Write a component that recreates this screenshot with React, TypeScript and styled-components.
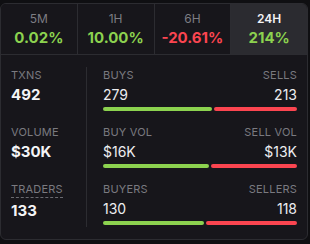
import styled, { createGlobalStyle } from 'styled-components';

const GlobalStyle = createGlobalStyle`
  body {
    margin: 0;
    background: #0f0f12;
    font-family: Inter, "Noto Sans", sans-serif;
  }
`;

const GREEN = '#8cd24f';
const RED = '#fb4550';

interface ITab {
  label: string;
  value: string;
  up: boolean;
}

interface IRow {
  leftLabel: string;
  leftValue: string;
  dashed?: boolean;
  buyLabel: string;
  sellLabel: string;
  buy: string;
  sell: string;
  buyNum: number;
  sellNum: number;
}

const tabs: ITab[] = [
  { label: '5M', value: '0.02%', up: true },
  { label: '1H', value: '10.00%', up: true },
  { label: '6H', value: '-20.61%', up: false },
  { label: '24H', value: '214%', up: true },
];

const rows: IRow[] = [
  { leftLabel: 'TXNS', leftValue: '492', buyLabel: 'BUYS', sellLabel: 'SELLS', buy: '279', sell: '213', buyNum: 279, sellNum: 213 },
  { leftLabel: 'VOLUME', leftValue: '$30K', buyLabel: 'BUY VOL', sellLabel: 'SELL VOL', buy: '$16K', sell: '$13K', buyNum: 16, sellNum: 13 },
  { leftLabel: 'TRADERS', leftValue: '133', dashed: true, buyLabel: 'BUYERS', sellLabel: 'SELLERS', buy: '130', sell: '118', buyNum: 130, sellNum: 118 },
];

export default function App() {
  return (
    <>
      <GlobalStyle />
      <Panel>
        <TabRow>
          {tabs.map((t, i) => (
            <Tab key={t.label} $active={i === 3}>
              <TabLabel $active={i === 3}>{t.label}</TabLabel>
              <TabValue $up={t.up}>{t.value}</TabValue>
            </Tab>
          ))}
        </TabRow>
        <Body>
          <LeftCol>
            {rows.map((r) => (
              <Stat key={r.leftLabel}>
                <Label $dashed={r.dashed}>{r.leftLabel}</Label>
                <BigValue>{r.leftValue}</BigValue>
              </Stat>
            ))}
          </LeftCol>
          <RightCol>
            {rows.map((r) => (
              <Split key={r.buyLabel}>
                <SplitHead>
                  <Side>
                    <Label>{r.buyLabel}</Label>
                    <Value>{r.buy}</Value>
                  </Side>
                  <Side $right>
                    <Label>{r.sellLabel}</Label>
                    <Value>{r.sell}</Value>
                  </Side>
                </SplitHead>
                <Bars>
                  <Bar $color={GREEN} style={{ flexGrow: r.buyNum }} />
                  <Bar $color={RED} style={{ flexGrow: r.sellNum }} />
                </Bars>
              </Split>
            ))}
          </RightCol>
        </Body>
      </Panel>
    </>
  );
}

const Panel = styled.div`
  box-sizing: border-box;
  width: 308px;
  height: 237px;
  margin: 3px 0 0 0;
  background: #17161b;
  border: 1px solid #2c2c31;
  border-radius: 6px;
  overflow: hidden;
`;

const TabRow = styled.div`
  display: flex;
  height: 50px;
  border-bottom: 1px solid #2c2c31;
`;

const Tab = styled.div<{ $active?: boolean }>`
  flex: 1;
  display: flex;
  flex-direction: column;
  align-items: center;
  justify-content: center;
  gap: 3px;
  background: ${(p) => (p.$active ? '#2b2b30' : '#17161b')};
  border-left: 1px solid #2c2c31;

  &:first-child {
    border-left: none;
  }
`;

const TabLabel = styled.div<{ $active?: boolean }>`
  font-size: 12px;
  line-height: 14px;
  font-weight: ${(p) => (p.$active ? 600 : 400)};
  color: ${(p) => (p.$active ? '#f2f2f4' : '#7d7d83')};
`;

const TabValue = styled.div<{ $up: boolean }>`
  font-size: 15px;
  line-height: 18px;
  font-weight: 700;
  color: ${(p) => (p.$up ? GREEN : RED)};
`;

const Body = styled.div`
  display: flex;
  padding: 12px 10px 0 10px;
`;

const LeftCol = styled.div`
  width: 76px;
  display: flex;
  flex-direction: column;
  gap: 22px;
  padding-top: 2px;
  border-right: 1px solid #2c2c31;
  height: 160px;
  box-sizing: border-box;
`;

const Stat = styled.div`
  display: flex;
  flex-direction: column;
  gap: 4px;
`;

const Label = styled.div<{ $dashed?: boolean }>`
  align-self: flex-start;
  font-size: 11px;
  line-height: 13px;
  color: #7a7a80;
  letter-spacing: 0.2px;
  ${(p) => (p.$dashed ? 'border-bottom: 1px dashed #6a6a70; padding-bottom: 1px;' : '')}
`;

const BigValue = styled.div`
  font-size: 15px;
  line-height: 18px;
  font-weight: 700;
  color: #f4f4f6;
`;

const RightCol = styled.div`
  flex: 1;
  padding: 2px 0 0 16px;
  display: flex;
  flex-direction: column;
  gap: 15px;
`;

const Split = styled.div`
  display: flex;
  flex-direction: column;
  gap: 3px;
`;

const SplitHead = styled.div`
  display: flex;
  justify-content: space-between;
`;

const Side = styled.div<{ $right?: boolean }>`
  display: flex;
  flex-direction: column;
  gap: 4px;
  align-items: ${(p) => (p.$right ? 'flex-end' : 'flex-start')};
`;

const Value = styled.div`
  font-size: 14px;
  line-height: 18px;
  color: #ededf0;
`;

const Bars = styled.div`
  display: flex;
  gap: 2px;
`;

const Bar = styled.div<{ $color: string }>`
  flex-basis: 0;
  height: 4px;
  border-radius: 2px;
  background: ${(p) => p.$color};
`;
